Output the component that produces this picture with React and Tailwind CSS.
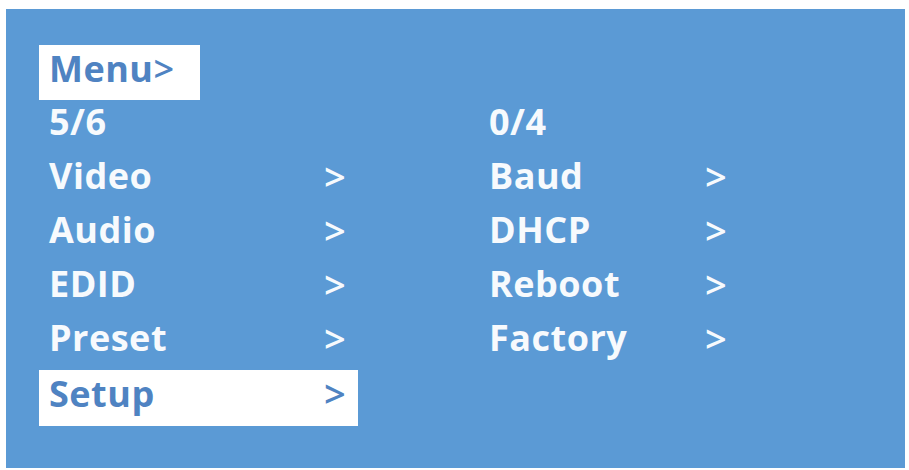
export default function App() {
  const left = ["Video", "Audio", "EDID", "Preset"];
  const right = ["Baud", "DHCP", "Reboot", "Factory"];
  const font = { fontFamily: '"Open Sans", "Noto Sans", sans-serif' };
  return (
    <div className="w-[909px] h-[470px] bg-white overflow-hidden" style={font}>
      <div className="ml-[6px] mt-[9px] w-[899px] h-[459px] bg-[#5b9ad5] pl-[33px] pt-[36px] text-[36px] font-bold text-[#f7fafd] tracking-[0.5px]">
        <div className="h-[50px]">
          <div className="w-[161px] h-[55px] bg-white text-[#4f83c2] pl-[10px] leading-[47px]">
            Menu<span className="font-semibold">&gt;</span>
          </div>
        </div>
        <div className="flex">
          <div className="w-[450px] flex flex-col">
            <div className="h-[54px] leading-[54px] pl-[10px]">5/6</div>
            {left.map((t) => (
              <div key={t} className="h-[54px] leading-[54px] flex">
                <div className="w-[285px] pl-[10px]">{t}</div>
                <div className="font-semibold text-[38px]">&gt;</div>
              </div>
            ))}
            <div className="h-[54px]">
              <div className="mt-[5px] w-[319px] h-[56px] bg-white text-[#4f83c2] flex leading-[47px]">
                <div className="w-[285px] pl-[10px]">Setup</div>
                <div className="font-semibold text-[38px]">&gt;</div>
              </div>
            </div>
          </div>
          <div className="flex flex-col">
            <div className="h-[54px] leading-[54px]">0/4</div>
            {right.map((t) => (
              <div key={t} className="h-[54px] leading-[54px] flex">
                <div className="w-[216px]">{t}</div>
                <div className="font-semibold text-[38px]">&gt;</div>
              </div>
            ))}
          </div>
        </div>
      </div>
    </div>
  );
}
